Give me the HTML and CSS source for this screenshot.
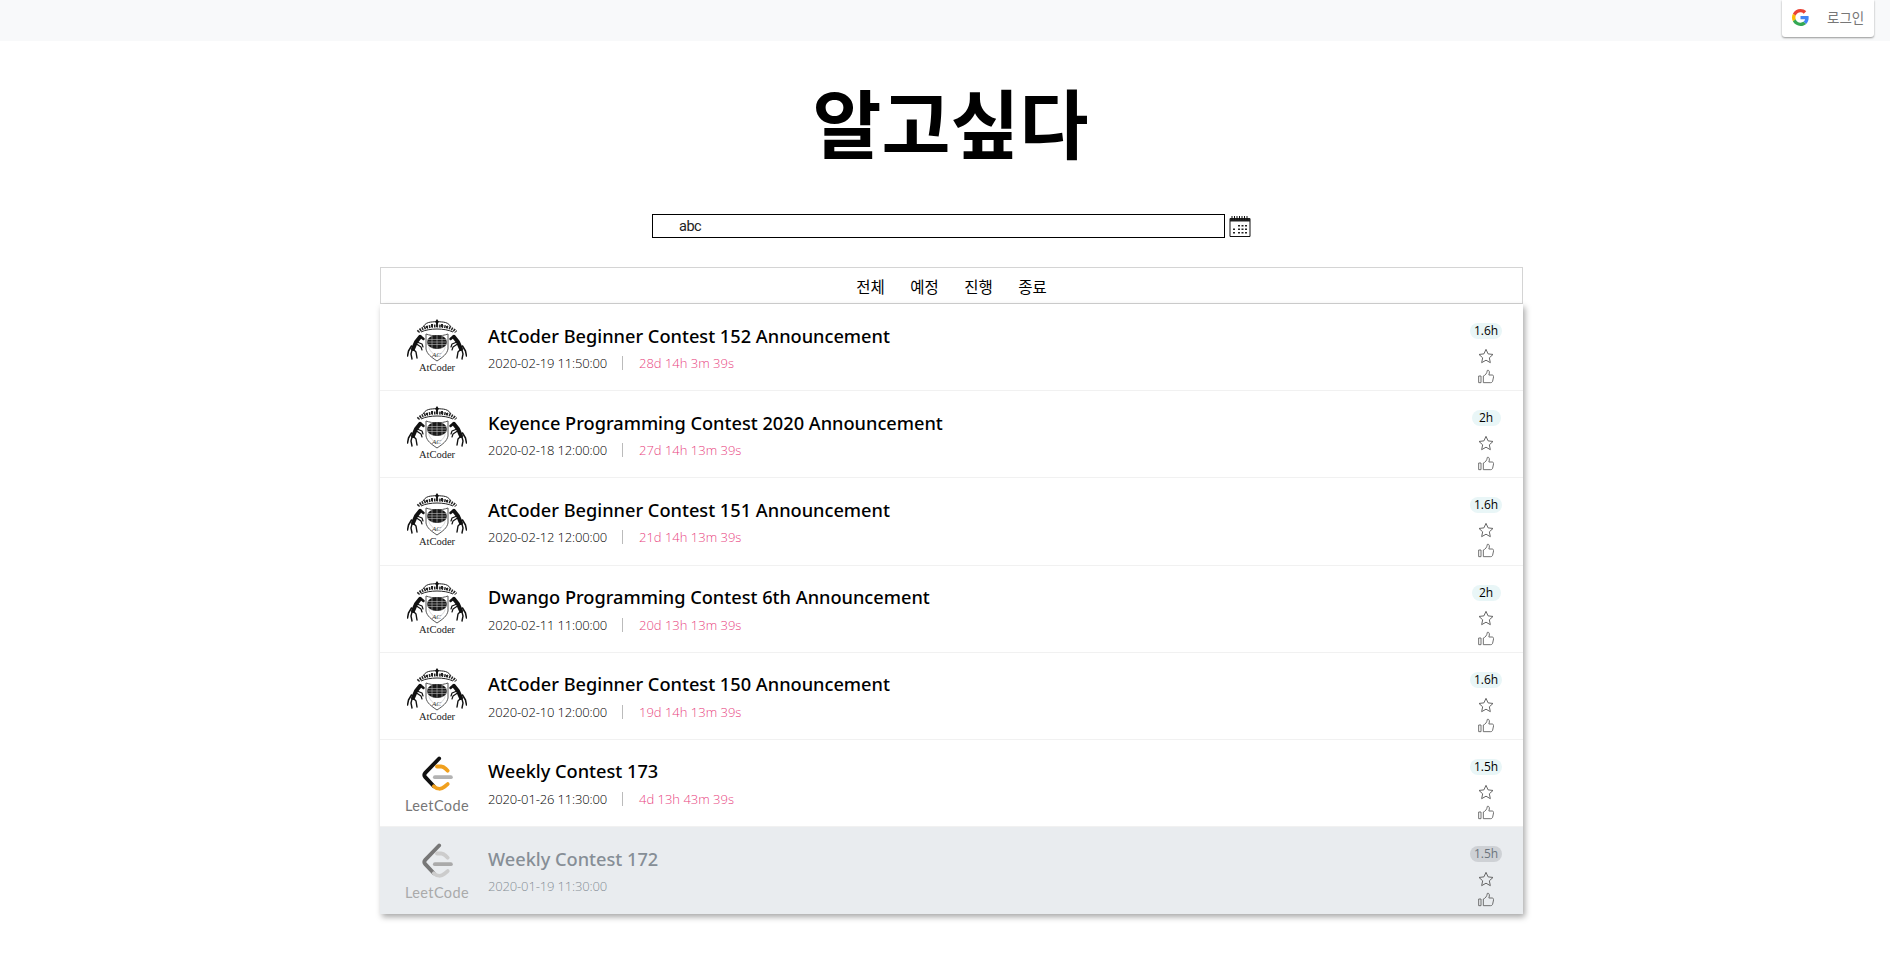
FILE: index.html
```html
<!DOCTYPE html>
<html lang="ko">
<head>
  <meta charset="UTF-8" />
  <title>알고싶다</title>
  <link rel="stylesheet" href="styles.css">
</head>
<body>

  <svg class="defs" width="0" height="0">
    <symbol id="crest" viewBox="0 0 60 46">
      <g fill="none" stroke="#222">
        <path d="M11 13C17 5 43 5 49 13" stroke-width="3" stroke-dasharray="1.500 1"/>
        <path d="M16 8C20 1 27 4 30 2C33 4 40 1 44 8" stroke-width="1"/>
        <path d="M14 13C22 9 38 9 46 13" stroke-width="1"/>
        <path d="M25 8V5M30 8V3M35 8V5M20 9V7M40 9V7" stroke-width="2"/>
      </g>
      <path d="M28 3l2-3 2 3-2 2z" fill="#111"/>
      <g id="horse" fill="none" stroke="#111" stroke-linecap="round" stroke-linejoin="round">
        <path d="M13 18L9 23L6 30" stroke-width="4"/>
        <path d="M13 17L16.500 20" stroke-width="2.500"/>
        <path d="M10 23L15 25L16 28M9.500 25L14 28L15 31" stroke-width="1.200"/>
        <path d="M6 30L9 33L10 39M5 31L4 35L5 40" stroke-width="1.400"/>
        <path d="M4.500 27L1.500 32L.5 37" stroke-width="1.500"/>
      </g>
      <use href="#horse" transform="matrix(-1 0 0 1 60 0)"/>
      <path d="M19 15c7 2.500 15 2.500 22 0v15c-1 5-5 8-11 12-6-4-10-7-11-12z" fill="#fff" stroke="#555" stroke-width="1"/>
      <path d="M22 19c5 1 11 1 16 0v10c-1 3-4 6-8 9-4-3-7-6-8-9z" fill="none" stroke="#bbb" stroke-width=".6"/>
      <ellipse cx="30" cy="23" rx="10" ry="7" fill="#1a1a1a"/>
      <path d="M20 20.500h20M20 23h20M20 25.500h20M25 16.500v13M30 16v14M35 16.500v13" stroke="#bbb" stroke-width=".6"/>
    </symbol>
    <symbol id="leet" viewBox="0 0 30 36">
      <path d="M17 3L4 16.500a3 3 0 0 0 0 4L12 29" fill="none" stroke="var(--leet-dark)" stroke-width="3.600" stroke-linecap="round"/>
      <path d="M12 29c3 3 7 3 10 .5L25 27M15 10.500h4c2 0 3 1 4 2l2 2" fill="none" stroke="var(--leet-accent)" stroke-width="3.600" stroke-linecap="round"/>
      <path d="M13 20.500h15" fill="none" stroke="var(--leet-mid)" stroke-width="3.600" stroke-linecap="round"/>
    </symbol>
    <symbol id="star" viewBox="0 0 24 24">
      <path d="M12 2l3.100 6.800 7.400.9-5.500 5 1.500 7.300-6.500-3.700L5.500 22 7 14.700l-5.500-5 7.400-.9z" fill="none" stroke="currentColor" stroke-width="1.500" stroke-linejoin="round"/>
    </symbol>
    <symbol id="thumb" viewBox="0 0 24 24">
      <path d="M1 10.500h3.500v10H1zM8 10.500c3-1 5.500-4 6-8.500 2-.6 3.500 1 3 4l-.7 3h4.700c2 0 2.700 1.500 2.300 3l-1.300 6c-.4 1.700-1.500 2.500-3 2.500H8z" fill="none" stroke="currentColor" stroke-width="1.400" stroke-linejoin="round"/>
    </symbol>
  </svg>

  <header class="topbar">
    <button class="login" type="button">
      <svg class="g-logo" viewBox="0 0 48 48">
        <path fill="#EA4335" d="M24 9.500c3.500 0 6.700 1.200 9.200 3.600l6.900-6.900C35.900 2.400 30.500 0 24 0 14.600 0 6.500 5.400 2.600 13.200l8 6.200C12.400 13.700 17.700 9.500 24 9.500z"/>
        <path fill="#4285F4" d="M47 24.500c0-1.600-.1-3.100-.4-4.500H24v9h12.900c-.6 3-2.200 5.500-4.700 7.200l7.700 6c4.500-4.200 7.100-10.300 7.100-17.700z"/>
        <path fill="#FBBC05" d="M10.500 28.600c-.5-1.400-.8-3-.8-4.600s.3-3.200.8-4.600l-8-6.200C.9 16.500 0 20.100 0 24s.9 7.500 2.600 10.800z"/>
        <path fill="#34A853" d="M24 48c6.500 0 11.900-2.100 15.900-5.800l-7.700-6c-2.200 1.400-4.900 2.300-8.200 2.300-6.300 0-11.600-4.200-13.500-9.900l-8 6.200C6.500 42.600 14.600 48 24 48z"/>
      </svg>
      <span>로그인</span>
    </button>
  </header>

  <main class="container">
    <h1 class="brand">알고싶다</h1>

    <div class="search">
      <input class="search-input" type="text" value="abc">
      <svg class="cal" viewBox="0 0 22 22">
        <path d="M1 3.500h20v18H1z" fill="#fff" stroke="#111" stroke-width="1"/>
        <path d="M1 3h20v3.500H1z" fill="#222"/>
        <path d="M3 1v4M5.500 1v4M8 1v4M10.500 1v4M13 1v4M15.500 1v4M18 1v4" stroke="#111" stroke-width="1"/>
        <path d="M9 10h2v1.500H9zM12.500 10h2v1.500h-2zM16 10h2v1.500h-2zM4 13.500h2V15H4zM9 13.500h2V15H9zM12.500 13.500h2V15h-2zM16 13.500h2V15h-2zM4 17h2v1.500H4zM9 17h2v1.500H9zM12.500 17h2v1.500h-2zM16 17h2v1.500h-2z" fill="#222"/>
      </svg>
    </div>

    <nav class="tabs">
      <a>전체</a>
      <a>예정</a>
      <a>진행</a>
      <a>종료</a>
    </nav>

    <ul class="contests">
      <li class="contest">
        <div class="logo"><svg class="crest"><use href="#crest"/></svg><span class="crest-mark">AC</span><span class="crest-name">AtCoder</span></div>
        <div class="info">
          <div class="name">AtCoder Beginner Contest 152 Announcement</div>
          <div class="meta"><span class="date">2020-02-19 11:50:00</span><i class="sep"></i><span class="left">28d 14h 3m 39s</span></div>
        </div>
        <div class="side">
          <span class="hours">1.6h</span>
          <svg class="ico star"><use href="#star"/></svg>
          <svg class="ico"><use href="#thumb"/></svg>
        </div>
      </li>
      <li class="contest">
        <div class="logo"><svg class="crest"><use href="#crest"/></svg><span class="crest-mark">AC</span><span class="crest-name">AtCoder</span></div>
        <div class="info">
          <div class="name">Keyence Programming Contest 2020 Announcement</div>
          <div class="meta"><span class="date">2020-02-18 12:00:00</span><i class="sep"></i><span class="left">27d 14h 13m 39s</span></div>
        </div>
        <div class="side">
          <span class="hours">2h</span>
          <svg class="ico star"><use href="#star"/></svg>
          <svg class="ico"><use href="#thumb"/></svg>
        </div>
      </li>
      <li class="contest">
        <div class="logo"><svg class="crest"><use href="#crest"/></svg><span class="crest-mark">AC</span><span class="crest-name">AtCoder</span></div>
        <div class="info">
          <div class="name">AtCoder Beginner Contest 151 Announcement</div>
          <div class="meta"><span class="date">2020-02-12 12:00:00</span><i class="sep"></i><span class="left">21d 14h 13m 39s</span></div>
        </div>
        <div class="side">
          <span class="hours">1.6h</span>
          <svg class="ico star"><use href="#star"/></svg>
          <svg class="ico"><use href="#thumb"/></svg>
        </div>
      </li>
      <li class="contest">
        <div class="logo"><svg class="crest"><use href="#crest"/></svg><span class="crest-mark">AC</span><span class="crest-name">AtCoder</span></div>
        <div class="info">
          <div class="name">Dwango Programming Contest 6th Announcement</div>
          <div class="meta"><span class="date">2020-02-11 11:00:00</span><i class="sep"></i><span class="left">20d 13h 13m 39s</span></div>
        </div>
        <div class="side">
          <span class="hours">2h</span>
          <svg class="ico star"><use href="#star"/></svg>
          <svg class="ico"><use href="#thumb"/></svg>
        </div>
      </li>
      <li class="contest">
        <div class="logo"><svg class="crest"><use href="#crest"/></svg><span class="crest-mark">AC</span><span class="crest-name">AtCoder</span></div>
        <div class="info">
          <div class="name">AtCoder Beginner Contest 150 Announcement</div>
          <div class="meta"><span class="date">2020-02-10 12:00:00</span><i class="sep"></i><span class="left">19d 14h 13m 39s</span></div>
        </div>
        <div class="side">
          <span class="hours">1.6h</span>
          <svg class="ico star"><use href="#star"/></svg>
          <svg class="ico"><use href="#thumb"/></svg>
        </div>
      </li>
      <li class="contest">
        <div class="logo"><svg class="leet"><use href="#leet"/></svg><span class="leet-name">LeetCode</span></div>
        <div class="info">
          <div class="name">Weekly Contest 173</div>
          <div class="meta"><span class="date">2020-01-26 11:30:00</span><i class="sep"></i><span class="left">4d 13h 43m 39s</span></div>
        </div>
        <div class="side">
          <span class="hours">1.5h</span>
          <svg class="ico star"><use href="#star"/></svg>
          <svg class="ico"><use href="#thumb"/></svg>
        </div>
      </li>
      <li class="contest ended">
        <div class="logo"><svg class="leet"><use href="#leet"/></svg><span class="leet-name">LeetCode</span></div>
        <div class="info">
          <div class="name">Weekly Contest 172</div>
          <div class="meta"><span class="date">2020-01-19 11:30:00</span></div>
        </div>
        <div class="side">
          <span class="hours">1.5h</span>
          <svg class="ico star"><use href="#star"/></svg>
          <svg class="ico"><use href="#thumb"/></svg>
        </div>
      </li>
    </ul>
  </main>

</body>
</html>
```

FILE: styles.css
```css
* { box-sizing: border-box; }
body { margin: 0; min-height: 100vh; background: #fff; color: #000; font-family: "Open Sans", "Noto Sans CJK KR", sans-serif; }
.defs { position: absolute; }

.topbar { height: 41px; background: #f8f9fa; display: flex; justify-content: flex-end; padding-right: 16px; }
.login { width: 92px; height: 37px; display: flex; align-items: center; gap: 18px; padding: 0 0 0 10px; background: #fff; border: none; border-radius: 0 0 3px 3px; box-shadow: 0 1px 2px rgba(0,0,0,.4); color: #777; font-family: "Noto Sans CJK KR", sans-serif; font-size: 13.500px; }
.g-logo { width: 17px; height: 17px; margin-top: -3px; }
.login span { margin-top: -4px; }

.container { width: 1143px; margin: 0 0 0 380px; }
.brand { margin: 30px 0 0; height: 103px; text-align: center; font-family: "Noto Sans CJK KR", sans-serif; font-size: 75px; font-weight: 700; line-height: 100px; transform: translateX(-1px); }

.search { display: flex; align-items: center; gap: 4px; margin: 40px 0 0 272px; }
.search-input { width: 573px; height: 24px; padding: 1px 0 0 26px; border: 1px solid #000; font-family: Roboto, sans-serif; font-size: 14.500px; letter-spacing: -.5px; color: #222; outline: none; }
.cal { width: 22px; height: 22px; }

.tabs { display: flex; justify-content: center; gap: 25.500px; height: 37px; margin-top: 29px; border: 1px solid #d4d4d4; align-items: center; font-family: "Noto Sans CJK KR", sans-serif; font-size: 15.500px; }

.contests { list-style: none; margin: 0; padding: 0; box-shadow: 2px 3px 6px rgba(0,0,0,.35); }
.contest { display: flex; height: 87.200px; padding-left: 27px; border-bottom: 1px solid #f1f1f1; background: #fff; }
.logo { position: relative; width: 60px; display: flex; flex-direction: column; align-items: center; padding-top: 15px; }
.crest { width: 60px; height: 46px; display: block; }
.crest-mark { position: absolute; top: 47px; left: 25px; font-family: "Liberation Serif", serif; font-size: 7px; line-height: 8px; font-style: italic; color: #333; }
.crest-name { font-family: "Liberation Serif", serif; font-size: 10.500px; line-height: 11px; color: #222; margin-top: -3px; }
.leet { width: 32px; height: 39px; display: block; --leet-dark: #111; --leet-accent: #f0a01e; --leet-mid: #b3b3b3; }
.leet-name { font-family: Lato, sans-serif; font-size: 14.500px; line-height: 18px; color: #777; letter-spacing: .4px; margin-top: 3px; }

.info { flex: 1; padding: 18.500px 0 0 21px; }
.name { font-family: "Noto Sans", "Open Sans", sans-serif; font-size: 18.200px; font-weight: 500; line-height: 27px; }
.meta { display: flex; align-items: center; font-size: 13px; font-weight: 300; line-height: 20px; margin-top: 3.500px; color: #000; }
.date { letter-spacing: -.15px; }
.sep { width: 1px; height: 14px; margin: 0 16px 0 15px; background: #bbb; }
.left { color: #e8457f; }

.side { width: 66px; display: flex; flex-direction: column; align-items: center; padding: 19px 8px 0 0; }
.hours { min-width: 29px; height: 16px; padding: 0 4px; border-radius: 8px; background: #e9f6f7; font-size: 12px; line-height: 16px; text-align: center; }
.ico { width: 16px; height: 16px; color: #666; margin-top: 5px; display: block; }
.ico.star { margin-top: 9px; }

.ended { background: #e9ecef; border-bottom: none; }
.ended .name, .ended .meta { color: #868e96; }
.ended .leet { --leet-dark: #777; --leet-accent: #ccc; --leet-mid: #aaa; }
.ended .leet-name { color: #aaa; }
.ended .hours { background: #ced1d5; color: #6c757d; }
```
